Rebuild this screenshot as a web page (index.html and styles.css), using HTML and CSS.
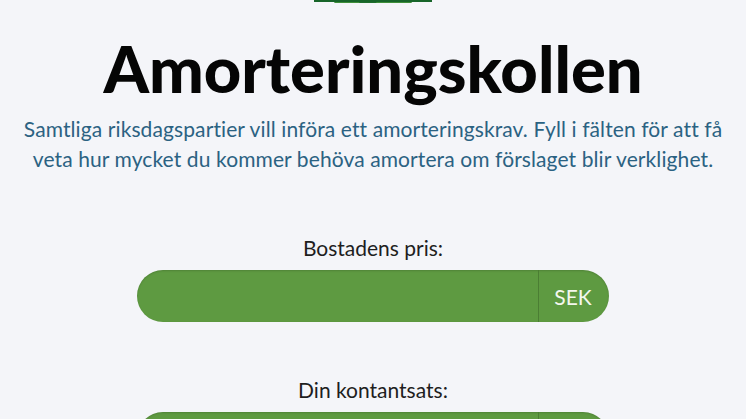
FILE: index.html
```html
<!DOCTYPE html>
<html lang="sv">
<head>
<meta charset="utf-8">
<title>Amorteringskollen</title>
<link rel="stylesheet" href="styles.css">
</head>
<body>
<div class="page">
  <div class="logo">
    <svg width="118" height="40" viewBox="0 0 118 40">
      <path d="M20 40 L40 10 L60 40 Z" fill="#3f8f3a"/>
      <path d="M45 40 L65 5 L85 40 Z" fill="#1f6e2e"/>
      <path d="M62 40 L80 12 L98 40 Z" fill="#3f8f3a"/>
      <rect x="0" y="36" width="118" height="3" fill="#17652a"/>
    </svg>
  </div>
  <h1 class="title">Amorteringskollen</h1>
  <p class="intro">Samtliga riksdagspartier vill införa ett amorteringskrav. Fyll i fälten för att få veta hur mycket du kommer behöva amortera om förslaget blir verklighet.</p>
  <form class="form">
    <div class="field">
      <label class="label">Bostadens pris:</label>
      <div class="input-group">
        <input class="input" type="text">
        <span class="addon">SEK</span>
      </div>
    </div>
    <div class="field">
      <label class="label">Din kontantsats:</label>
      <div class="input-group">
        <input class="input" type="text">
        <span class="addon">SEK</span>
      </div>
    </div>
  </form>
</div>
</body>
</html>
```
FILE: styles.css
```css
html, body {
  margin: 0;
  padding: 0;
  background: #f4f5f9;
}
body {
  font-family: Lato, "Open Sans", sans-serif;
  color: #222;
}
.page {
  display: flex;
  flex-direction: column;
  align-items: center;
}
.logo {
  height: 3px;
  overflow: hidden;
  display: flex;
  align-items: flex-end;
}
.logo svg {
  display: block;
  flex-shrink: 0;
}
.title {
  margin: 26px 0 0;
  font-size: 65px;
  font-weight: 900;
  line-height: 78px;
  color: #050505;
}
.intro {
  margin: 7px 0 0;
  width: 716px;
  text-align: center;
  font-size: 21px;
  letter-spacing: 0.1px;
  line-height: 30px;
  color: #2b6282;
}
.form {
  margin-top: 62px;
  display: flex;
  flex-direction: column;
  gap: 56px;
}
.field {
  display: flex;
  flex-direction: column;
  align-items: center;
  gap: 10px;
}
.label {
  font-size: 21px;
  line-height: 24px;
  color: #1e1e1e;
}
.input-group {
  display: flex;
  width: 472px;
  height: 52px;
  border-radius: 26px;
  overflow: hidden;
  background: #5e9a41;
  box-shadow: inset 0 1px 2px rgba(0,0,0,0.15);
}
.input {
  flex: 1;
  border: 0;
  background: transparent;
  outline: none;
  border-right: 1px solid #4b7e33;
}
.addon {
  width: 68px;
  display: flex;
  align-items: center;
  justify-content: center;
  color: #f3f7ee;
  font-size: 21px;
  padding-right: 2px;
}
```
